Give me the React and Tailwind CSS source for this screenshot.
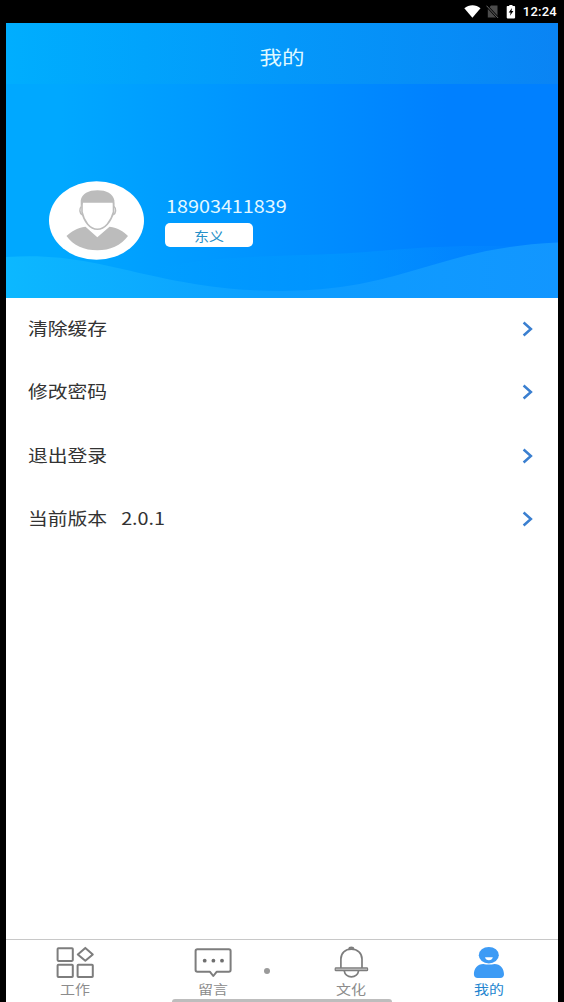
import React from "react";

const menuItems = [
  { label: "清除缓存" },
  { label: "修改密码" },
  { label: "退出登录" },
  { label: "当前版本", value: "2.0.1" },
];

const WorkIcon = () => (
  <svg width="40" height="34" viewBox="0 0 40 34" fill="none" stroke="#7d7d7d" strokeWidth="2" strokeLinejoin="round">
    <rect x="2.6" y="3.3" width="15.2" height="12.6" rx="0.8" />
    <path d="M30.3 2.9L37.8 9.4l-7.5 6.4L22.8 9.4z" />
    <rect x="2.6" y="19.8" width="15.2" height="12.2" rx="0.8" />
    <rect x="22.6" y="19.8" width="15.2" height="12.2" rx="0.8" />
  </svg>
);

const MessageIcon = () => (
  <svg width="40" height="34" viewBox="0 0 40 34" fill="none" stroke="#7d7d7d" strokeWidth="2" strokeLinejoin="round">
    <path d="M4.4 4.2h31.4a1.8 1.8 0 0 1 1.8 1.8v19a1.8 1.8 0 0 1-1.8 1.8H23.6L20.3 31l-3.3-4.2H4.4a1.8 1.8 0 0 1-1.8-1.8V6a1.8 1.8 0 0 1 1.8-1.8z" />
    <g fill="#6f6f6f" stroke="none">
      <circle cx="11.7" cy="15.7" r="1.9" />
      <circle cx="20.4" cy="15.7" r="1.9" />
      <circle cx="29" cy="15.7" r="1.9" />
    </g>
  </svg>
);

const BellIcon = () => (
  <svg width="40" height="34" viewBox="0 0 40 34" fill="none" stroke="#7d7d7d" strokeWidth="1.7">
    <path d="M9.9 23V14C9.9 8 14.2 4.1 20.3 4.1S31 8 31 14v9" />
    <path d="M17.9 3.8c.3-2 4.5-2 4.8 0" fill="#7d7d7d" />
    <path d="M13.2 25.7c.5 3.6 3.4 6.2 7.2 6.2s6.7-2.6 7.2-6.2" />
    <rect x="4.2" y="22.9" width="32.4" height="2.8" rx="0.8" fill="#b5b5b5" strokeWidth="1.2" />
  </svg>
);

const MineIcon = () => (
  <svg width="40" height="34" viewBox="0 0 40 34" fill="#3d9bf5">
    <ellipse cx="19.8" cy="10.2" rx="10" ry="8.3" />
    <path d="M16 12.3h7.8c-.4 1.9-1.9 2.9-3.9 2.9s-3.5-1-3.900-2.900z" fill="#fff" />
    <path d="M4.9 29.2c0-5.9 3.6-10.3 9.4-10.3 1.8.5 3.7.7 5.6.7s3.8-.2 5.6-.7c5.8 0 9.5 4.4 9.5 10.3 0 2.4-1.4 3.8-3.8 3.8H8.7c-2.4 0-3.8-1.4-3.8-3.8z" />
  </svg>
);

const tabs = [
  { label: "工作", icon: WorkIcon },
  { label: "留言", icon: MessageIcon },
  { label: "文化", icon: BellIcon },
  { label: "我的", icon: MineIcon, active: true },
];

const StatusBar = () => (
  <div className="flex h-[23px] items-center justify-end bg-black pr-[7px] text-white">
    <svg width="17" height="14" viewBox="0 0 17 14" className="mr-[5px]">
      <path d="M0.3 3.3C5-.8 12-.8 16.5 3.3L8.4 12.8z" fill="#fff" />
    </svg>
    <svg width="13" height="14" viewBox="0 0 13 14" className="mr-[7px]">
      <path d="M5 .5h6.5v12H1.8V3.9z" fill="#4c4c4c" />
      <path d="M0.5 .7L12 12.9" stroke="#000" strokeWidth="2.4" />
      <path d="M0.5 .7L12 12.9" stroke="#707070" strokeWidth="1" />
    </svg>
    <svg width="10" height="14" viewBox="0 0 10 14" className="mr-[7px]">
      <path d="M1.5 1h1.8V0h3.2v1h1.8q.8 0 .8.8v10.8q0 .8-.8.8H1.5q-.8 0-.8-.8V1.8q0-.8.8-.8z" fill="#fff" />
      <path d="M6 3L2.7 7.4h1.9L4 10.8l3.4-4.7H5.5z" fill="#000" />
    </svg>
    <span className="font-[Roboto] text-[13px] leading-none font-medium tracking-[0.25px]">12:24</span>
  </div>
);

const Waves = () => (
  <svg className="absolute inset-0 h-full w-full" viewBox="0 0 552 214" preserveAspectRatio="none">
    <defs>
      <linearGradient id="wave" x1="0" x2="1" y1="0" y2="0">
        <stop offset="0" stopColor="#0cb8ff" />
        <stop offset="0.5" stopColor="#0d9dff" />
        <stop offset="1" stopColor="#1296ff" />
      </linearGradient>
      <linearGradient id="haze" x1="0" x2="1" y1="0" y2="0">
        <stop offset="0" stopColor="#00a6ff" stopOpacity="0" />
        <stop offset="0.45" stopColor="#00a0ff" stopOpacity="0.4" />
        <stop offset="1" stopColor="#10a0ff" stopOpacity="0" />
      </linearGradient>
    </defs>
    <path d="M140 186C220 168 290 174 360 168S460 160 552 164V214H140z" fill="url(#haze)" />
    <path d="M0 173C55 169 95 180 138 190C195 203 235 207 276 207C400 206 430 164 552 158.5V214H0z" fill="url(#wave)" />
  </svg>
);

const Avatar = () => (
  <svg width="95" height="79" viewBox="0 0 95 79">
    <ellipse cx="47.5" cy="39.5" rx="47.5" ry="39.3" fill="#fff" />
    <path d="M17.5 55C22 50.5 28 47 36.5 45.7L48.3 56.3 60.5 45.7C69 47 75 50.5 79 55C72 64.5 61 69.3 48.3 69.3S24 64.5 17.5 55z" fill="#bcbcbc" />
    <path d="M33 21.5V31C35 40.5 41 48.3 48.4 48.3S62 40.5 64.5 31V21.5" fill="#fff" stroke="#bcbcbc" strokeWidth="1.6" />
    <path d="M32.5 25.5c-2.5 2-2 7 .8 8.3M65 25.5c2.5 2 2 7-.8 8.3" fill="none" stroke="#bcbcbc" strokeWidth="1.5" />
    <path d="M31.7 26.5V19.5C33 12.5 39.5 9.3 48.5 9.3S64 12.5 65.4 19.5V26.5L63.6 21.7H34z" fill="#bcbcbc" />
  </svg>
);

const Profile = () => (
  <div className="relative h-[214px] shrink-0 bg-linear-to-r from-[#00a8ff] from-10% via-[#0091ff] via-50% to-[#0080ff] to-80%">
    <Waves />
    <div className="relative flex items-start pt-[97px] pl-[43px]">
      <Avatar />
      <div className="ml-[21px] pt-[14px]">
        <p className="ml-[1px] origin-center scale-y-[0.88] text-[19.8px] leading-[22px] text-[#e2f8ff]">18903411839</p>
        <div className="mt-[6px] flex h-[24px] w-[88px] items-center justify-center rounded-[5px] bg-white">
          <span className="scale-y-[0.84] text-[15px] leading-none text-[#2690c8]">东义</span>
        </div>
      </div>
    </div>
  </div>
);

const App = () => {
  return (
    <div className="flex h-[1002px] w-[564px] flex-col bg-black font-['Noto_Sans_CJK_SC',sans-serif]">
      <StatusBar />
      <div className="relative mx-[6px] flex min-h-0 flex-1 flex-col bg-white">
        <header className="flex h-[61px] shrink-0 items-center justify-center bg-linear-to-r from-[#00aefe] via-[#0498fa] to-[#0a84f4] pt-[5px]">
          <h1 className="scale-y-[0.87] text-[22.5px] leading-none text-[#dff8ff]">我的</h1>
        </header>
        <Profile />
        <ul className="-mt-px flex-1">
          {menuItems.map((item) => (
            <li key={item.label} className="flex h-[63.5px] items-center justify-between pr-[25px] pl-[22px]">
              <span className="scale-y-[0.85] pb-[2px] text-[19.8px] leading-none text-[#333]">
                {item.label}
                {item.value && <span className="ml-[14px]">{item.value}</span>}
              </span>
              <svg width="11" height="16" viewBox="0 0 11 16" fill="none" stroke="#3a7fd0" strokeWidth="2.5">
                <path d="M1.6 1.5L8.9 8L1.6 14.5" />
              </svg>
            </li>
          ))}
        </ul>
        <nav className="grid h-[63px] shrink-0 grid-cols-4 border-t-[1.5px] border-[#c8c8c8]">
          {tabs.map(({ label, icon: Icon, active }) => (
            <div key={label} className="flex flex-col items-center pt-[5px]">
              <Icon />
              <span
                className={`mt-[2px] scale-y-[0.84] text-[15px] leading-none ${active ? "text-[#2385cf]" : "text-[#8c8c8c]"}`}
              >
                {label}
              </span>
            </div>
          ))}
        </nav>
        {/* system gesture handle */}
        <div className="absolute bottom-0 left-[166px] h-[3px] w-[220px] rounded-t-full bg-[#bdbdbd]" />
        <div className="absolute bottom-[28px] left-[258px] size-[6px] rounded-full bg-[#9a9a9a]" />
      </div>
    </div>
  );
};

export default App;
